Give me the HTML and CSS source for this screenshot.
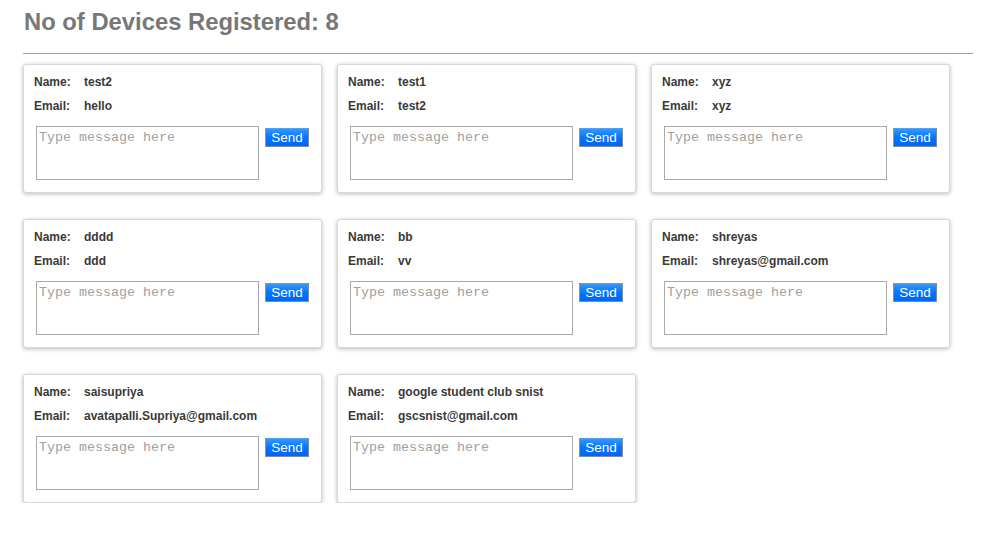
FILE: index.html
```html
<!DOCTYPE html>
<html>
<head>
<meta charset="utf-8">
<link rel="stylesheet" href="styles.css">
</head>
<body>
<div class="page">
  <h2 class="title">No of Devices Registered: 8</h2>
  <hr class="rule">
  <div class="grid">
    <div class="card">
      <div class="row"><span class="label">Name:</span><span>test2</span></div>
      <div class="row"><span class="label">Email:</span><span>hello</span></div>
      <div class="compose"><textarea class="msg" placeholder="Type message here"></textarea><button class="send">Send</button></div>
    </div>
    <div class="card">
      <div class="row"><span class="label">Name:</span><span>test1</span></div>
      <div class="row"><span class="label">Email:</span><span>test2</span></div>
      <div class="compose"><textarea class="msg" placeholder="Type message here"></textarea><button class="send">Send</button></div>
    </div>
    <div class="card">
      <div class="row"><span class="label">Name:</span><span>xyz</span></div>
      <div class="row"><span class="label">Email:</span><span>xyz</span></div>
      <div class="compose"><textarea class="msg" placeholder="Type message here"></textarea><button class="send">Send</button></div>
    </div>
    <div class="card">
      <div class="row"><span class="label">Name:</span><span>dddd</span></div>
      <div class="row"><span class="label">Email:</span><span>ddd</span></div>
      <div class="compose"><textarea class="msg" placeholder="Type message here"></textarea><button class="send">Send</button></div>
    </div>
    <div class="card">
      <div class="row"><span class="label">Name:</span><span>bb</span></div>
      <div class="row"><span class="label">Email:</span><span>vv</span></div>
      <div class="compose"><textarea class="msg" placeholder="Type message here"></textarea><button class="send">Send</button></div>
    </div>
    <div class="card">
      <div class="row"><span class="label">Name:</span><span>shreyas</span></div>
      <div class="row"><span class="label">Email:</span><span>shreyas@gmail.com</span></div>
      <div class="compose"><textarea class="msg" placeholder="Type message here"></textarea><button class="send">Send</button></div>
    </div>
    <div class="card">
      <div class="row"><span class="label">Name:</span><span>saisupriya</span></div>
      <div class="row"><span class="label">Email:</span><span>avatapalli.Supriya@gmail.com</span></div>
      <div class="compose"><textarea class="msg" placeholder="Type message here"></textarea><button class="send">Send</button></div>
    </div>
    <div class="card">
      <div class="row"><span class="label">Name:</span><span>google student club snist</span></div>
      <div class="row"><span class="label">Email:</span><span>gscsnist@gmail.com</span></div>
      <div class="compose"><textarea class="msg" placeholder="Type message here"></textarea><button class="send">Send</button></div>
    </div>
  </div>
</div>
</body>
</html>
```

FILE: styles.css
```css
html, body {
  margin: 0;
  padding: 0;
  background: #fff;
}
body {
  font-family: "Liberation Sans", Arial, sans-serif;
}
.page {
  padding: 8px 0 0 23px;
  width: 950px;
}
.title {
  margin: 0 0 0 1px;
  font-size: 23.8px;
  line-height: 28px;
  font-weight: bold;
  color: #777;
}
.rule {
  margin: 17px 0 10px 0;
  border: 0;
  border-top: 1px solid #a0a0a0;
  height: 0;
}
.grid {
  display: grid;
  grid-template-columns: 299px 299px 299px;
  column-gap: 15px;
  row-gap: 26px;
}
.card {
  box-sizing: border-box;
  height: 129px;
  border: 1px solid #d8d8d8;
  border-radius: 3px;
  box-shadow: 0 1px 4px rgba(0, 0, 0, 0.28);
  padding: 5px 10px 12px 10px;
  background: #fff;
}
.row {
  display: flex;
  height: 24px;
  line-height: 24px;
  font-size: 12px;
  font-weight: bold;
  color: #3a3a3a;
}
.label {
  width: 50px;
  flex: none;
}
.compose {
  display: flex;
  align-items: flex-start;
  margin-top: 8px;
  padding-left: 2px;
}
.msg {
  box-sizing: border-box;
  width: 223px;
  height: 54px;
  margin: 0;
  padding: 3px 2px 2px 2px;
  border: 1px solid #a9a9a9;
  font-family: "Liberation Mono", "Courier New", monospace;
  font-size: 13.33px;
  resize: none;
  flex: none;
}
.msg::placeholder {
  color: #a0a0a0;
}
.send {
  box-sizing: border-box;
  margin: 2px 0 0 6px;
  width: 44px;
  height: 19px;
  padding: 0;
  font-family: "Liberation Sans", Arial, sans-serif;
  font-size: 13.5px;
  line-height: 16px;
  color: #fff;
  background: linear-gradient(#3597ff, #0575fa 50%, #0066f0);
  border: 1px solid;
  border-color: #4aa3ff #8a8a8a #8a8a8a #4aa3ff;
  border-radius: 0;
}
```
